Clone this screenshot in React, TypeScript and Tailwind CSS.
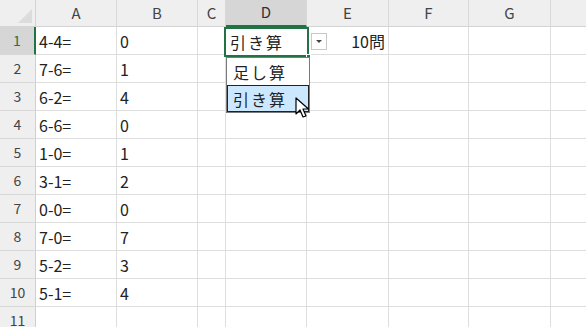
import React from "react";

const cols = [
  { name: "A", w: "w-[81px]" },
  { name: "B", w: "w-[81px]" },
  { name: "C", w: "w-[28px]" },
  { name: "D", w: "w-[81px]" },
  { name: "E", w: "w-[82px]" },
  { name: "F", w: "w-[80px]" },
  { name: "G", w: "w-[82px]" },
  { name: "", w: "w-[40px]" },
];

const rows: [string, string][] = [
  ["4-4=", "0"],
  ["7-6=", "1"],
  ["6-2=", "4"],
  ["6-6=", "0"],
  ["1-0=", "1"],
  ["3-1=", "2"],
  ["0-0=", "0"],
  ["7-0=", "7"],
  ["5-2=", "3"],
  ["5-1=", "4"],
  ["", ""],
];

const font = { fontFamily: '"Noto Sans CJK JP", "Noto Sans", sans-serif' };

const Cursor = () => (
  <svg width="16" height="24" viewBox="0 0 16 24" className="absolute left-[295px] top-[97px]">
    <path
      d="M1 1 L1 17 L5 13 L8 20 L11 19 L8 12 L13.5 12 Z"
      fill="#fff"
      stroke="#000"
      strokeWidth="1.2"
      strokeLinejoin="round"
    />
  </svg>
);

export default function App() {
  return (
    <div className="relative w-[586px] h-[327px] overflow-hidden bg-white text-[#222]" style={font}>
      {/* header row */}
      <div className="flex h-[27px]">
        <div className="relative w-[36px] shrink-0 bg-[#efefef] border-r border-b border-[#d4d4d4]">
          <div className="absolute right-[3px] bottom-[3px] w-0 h-0 border-l-[14px] border-l-transparent border-b-[14px] border-b-[#dcdcdc]" />
        </div>
        {cols.map((c) => (
          <div
            key={c.name + c.w}
            className={`${c.w} shrink-0 flex items-center justify-center text-[15px] border-r border-[#d8d8d8] ${
              c.name === "D"
                ? "bg-[#d6d6d6] text-[#333] border-b-2 border-b-[#217346]"
                : "bg-[#efefef] text-[#444] border-b border-b-[#d4d4d4]"
            }`}
          >
            {c.name}
          </div>
        ))}
      </div>
      {rows.map((r, i) => (
        <div key={i} className="flex h-[28px]">
          <div
            className={`w-[36px] shrink-0 flex items-center justify-center text-[14px] border-b border-[#d8d8d8] ${
              i === 0
                ? "bg-[#d6d6d6] text-[#217346] border-r-2 border-r-[#217346]"
                : "bg-[#efefef] text-[#444] border-r border-r-[#cfcfcf]"
            }`}
          >
            {i + 1}
          </div>
          {cols.map((c, j) => (
            <div
              key={j}
              className={`${c.w} shrink-0 flex items-center border-r border-b border-[#dedede] text-[16px] ${
                j === 4 ? "justify-end pr-[3px]" : "pl-[3px]"
              }`}
            >
              {j === 0 ? r[0] : j === 1 ? r[1] : i === 0 && j === 4 ? "10問" : ""}
            </div>
          ))}
        </div>
      ))}

      {/* selected cell D1 */}
      <div className="absolute left-[224px] top-[27px] w-[85px] h-[30px] border-2 border-[#217346] bg-white flex items-center pl-[4px] text-[16px] tracking-[2px]">
        引き算
        <div className="absolute right-[-4px] bottom-[-4px] w-[5px] h-[5px] bg-[#217346] border border-white" />
      </div>

      {/* dropdown button */}
      <div className="absolute left-[311px] top-[33px] w-[16px] h-[17px] bg-white border border-[#c8c8c8] flex items-center justify-center">
        <div className="w-0 h-0 border-l-[3px] border-r-[3px] border-t-[3px] border-l-transparent border-r-transparent border-t-[#444]" />
      </div>

      {/* dropdown list */}
      <div className="absolute left-[226px] top-[57px] w-[84px] h-[56px] bg-white border border-[#7a7a7a] text-[16px] tracking-[2px]">
        <div className="h-[27px] flex items-center pl-[6px]">足し算</div>
        <div className="h-[27px] flex items-center pl-[5px] bg-[#cce8ff] border border-[#222]">引き算</div>
      </div>

      <Cursor />
    </div>
  );
}
